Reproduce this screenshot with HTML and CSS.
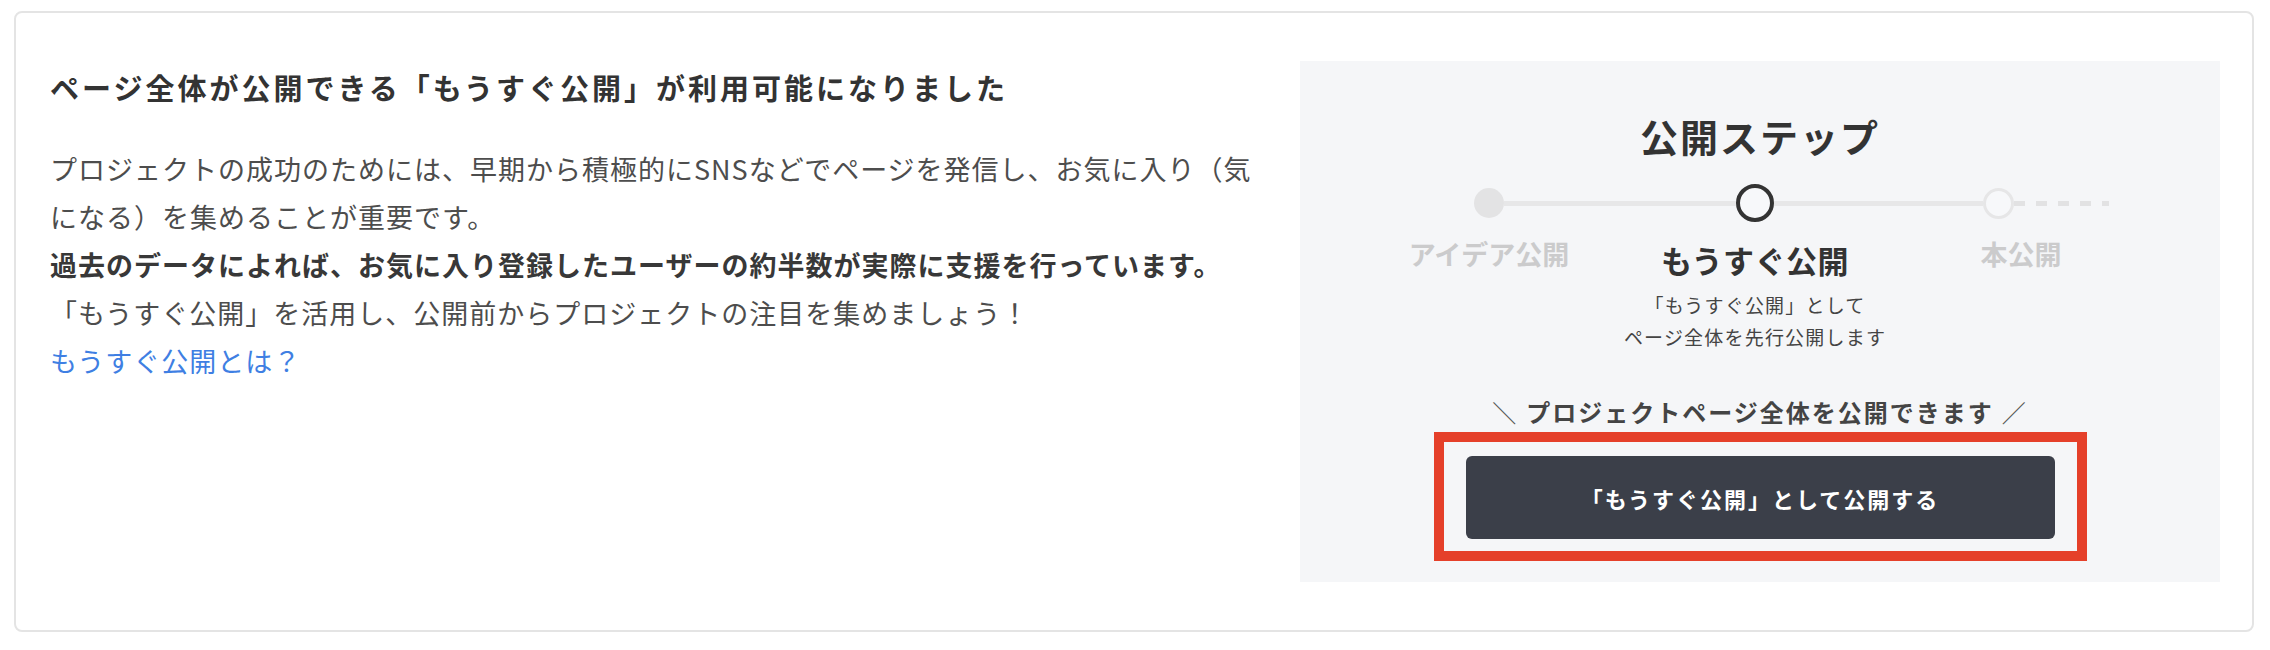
FILE: index.html
```html
<!DOCTYPE html>
<html lang="ja">
<head>
<meta charset="utf-8">
<title>もうすぐ公開</title>
<link rel="stylesheet" href="styles.css">
</head>
<body>
<section class="card">
  <div class="info">
    <h2 class="title">ページ全体が公開できる「もうすぐ公開」が利用可能になりました</h2>
    <p class="body">プロジェクトの成功のためには、早期から積極的にSNSなどでページを発信し、お気に入り（気になる）を集めることが重要です。<br><strong>過去のデータによれば、お気に入り登録したユーザーの約半数が実際に支援を行っています。</strong><br>「もうすぐ公開」を活用し、公開前からプロジェクトの注目を集めましょう！<br><a class="link" href="#">もうすぐ公開とは？</a></p>
  </div>
  <div class="panel">
    <h3 class="steps-title">公開ステップ</h3>
    <div class="steps">
      <div class="step">
        <div class="node-row"><span class="seg"></span><span class="dot dot-done"></span><span class="seg seg-on"></span></div>
        <div class="label label-side">アイデア公開</div>
      </div>
      <div class="step">
        <div class="node-row"><span class="seg seg-on"></span><span class="dot dot-current"></span><span class="seg seg-on"></span></div>
        <div class="label label-current">もうすぐ公開</div>
        <p class="sub">「もうすぐ公開」として<br>ページ全体を先行公開します</p>
      </div>
      <div class="step">
        <div class="node-row"><span class="seg seg-on"></span><span class="dot dot-next"></span><span class="seg seg-dash"></span></div>
        <div class="label label-side">本公開</div>
      </div>
    </div>
    <p class="tagline"><span class="slash">＼</span>プロジェクトページ全体を公開できます<span class="slash">／</span></p>
    <div class="highlight">
      <button class="cta" type="button">「もうすぐ公開」として公開する</button>
    </div>
  </div>
</section>
</body>
</html>
```

FILE: styles.css
```css
* { box-sizing: border-box; }

body {
  margin: 0;
  background: #ffffff;
  font-family: "Noto Sans CJK JP", "Noto Sans", sans-serif;
}

.card {
  margin: 11px 16px 0 14px;
  height: 621px;
  border: 2px solid #e4e4e4;
  border-radius: 8px;
  padding: 48px 32px 48px 34px;
  display: grid;
  grid-template-columns: 1fr 920px;
  column-gap: 30px;
  background: #fff;
}

.info {
  min-width: 0;
  padding-top: 3px;
}

.title {
  margin: 0;
  font-size: 29px;
  line-height: 46px;
  font-weight: 700;
  color: #333333;
  letter-spacing: 3px;
}

.body {
  margin: 35px 0 0;
  font-size: 27px;
  line-height: 48px;
  color: #4d4d4d;
  letter-spacing: 1px;
}

.body strong {
  font-weight: 700;
  color: #383838;
}

.link {
  color: #3f7fe3;
  text-decoration: none;
}

.panel {
  background: #f5f6f8;
  display: flex;
  flex-direction: column;
  align-items: center;
}

.steps-title {
  margin: 50px 0 0;
  font-size: 38px;
  line-height: 50px;
  font-weight: 700;
  color: #333333;
  letter-spacing: 2px;
}

.steps {
  margin-top: 22px;
  display: grid;
  grid-template-columns: repeat(3, 266px);
  margin-right: 10px;
}

.step {
  display: flex;
  flex-direction: column;
  align-items: center;
}

.node-row {
  width: 100%;
  height: 40px;
  display: flex;
  align-items: center;
}

.seg {
  flex: 1;
  height: 5px;
}

.seg-on {
  background: #e7e7e8;
}

.seg-dash {
  margin-right: 45px;
  background: repeating-linear-gradient(90deg, #e2e2e3 0 11px, transparent 11px 22px);
}

.dot {
  flex: none;
  border-radius: 50%;
}

.dot-done {
  width: 30px;
  height: 30px;
  background: #e3e3e4;
}

.dot-current {
  width: 38px;
  height: 38px;
  border: 4px solid #333333;
  background: #f7f8fa;
}

.dot-next {
  width: 31px;
  height: 31px;
  border: 3px solid #e6e6e7;
  background: #f7f8fa;
}

.label {
  margin-top: 17px;
  font-weight: 700;
  white-space: nowrap;
}

.label-side {
  font-size: 27px;
  line-height: 28px;
  letter-spacing: 0;
  color: #cbcbcc;
}

.label-current {
  font-size: 31px;
  line-height: 40px;
  letter-spacing: 0.5px;
  color: #333333;
}

.sub {
  margin: 9px 0 0;
  font-size: 19px;
  line-height: 32px;
  letter-spacing: 1.2px;
  color: #444444;
  text-align: center;
  white-space: nowrap;
}

.tagline {
  margin: 42px 0 0;
  font-size: 24px;
  line-height: 34px;
  font-weight: 700;
  letter-spacing: 2px;
  color: #444444;
  white-space: nowrap;
}

.slash {
  font-weight: 400;
  color: #555555;
  margin: 0 8px;
}

.highlight {
  margin-top: 3px;
  border: 10px solid #e5402a;
  padding: 14px 22px 12px;
}

.cta {
  display: block;
  width: 589px;
  height: 83px;
  border: none;
  border-radius: 6px;
  background: #3b3f49;
  color: #ffffff;
  font-family: inherit;
  font-size: 22px;
  font-weight: 700;
  letter-spacing: 2px;
  cursor: pointer;
}
```
